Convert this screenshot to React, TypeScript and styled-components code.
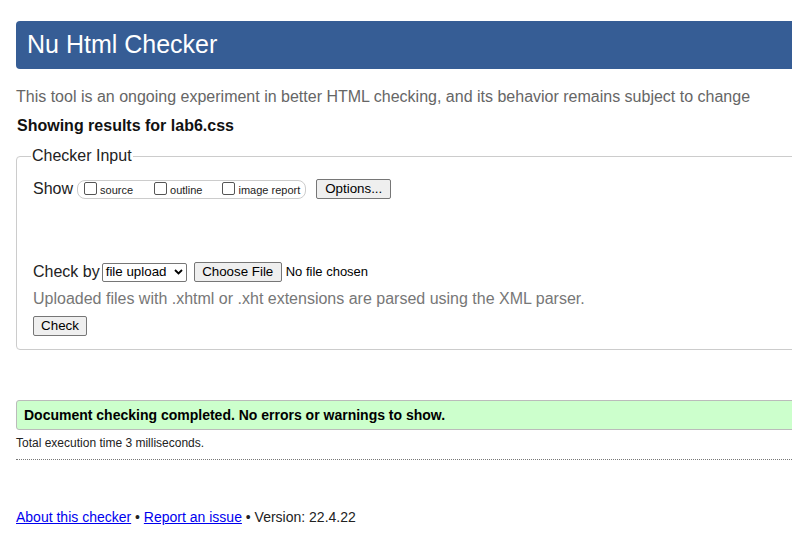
import React from 'react';
import styled, { createGlobalStyle } from 'styled-components';

const GlobalStyle = createGlobalStyle`
  html, body {
    margin: 0;
    padding: 0;
    background: #fff;
    overflow: hidden;
  }
  body {
    font-family: "Liberation Sans", Arial, sans-serif;
    color: #222;
  }
`;

const Page = styled.div`
  width: 1100px;
  padding: 21px 16px 0;
`;

const Header = styled.h1`
  margin: 0;
  height: 48px;
  line-height: 46px;
  padding: 0 11px;
  background: #365d95;
  color: #fff;
  font-size: 25px;
  font-weight: normal;
  border-radius: 4px;
`;

const Intro = styled.p`
  margin: 19px 0 0;
  font-size: 16px;
  line-height: 18px;
  color: #666;
`;

const Showing = styled.p`
  margin: 11px 0 0 1px;
  font-size: 16px;
  line-height: 18px;
  font-weight: bold;
  color: #111;
`;

const Fieldset = styled.fieldset`
  margin: 12px 0 0;
  padding: 6px 16px 13px;
  border: 1px solid #ccc;
  border-radius: 4px;
`;

const Legend = styled.legend`
  padding: 0 1px;
  margin-left: -2px;
  font-size: 16px;
  color: #222;
`;

const Row = styled.div<{ $mt?: number }>`
  display: flex;
  align-items: center;
  margin-top: ${(p) => p.$mt ?? 0}px;
  font-size: 16px;
  line-height: 20px;
`;

const Label = styled.span<{ $gap: number }>`
  margin-right: ${(p) => p.$gap}px;
`;

const Pill = styled.span`
  display: inline-flex;
  align-items: center;
  height: 17px;
  padding: 0 5px 0 6px;
  border: 1px solid #ccc;
  border-radius: 8px;
  margin-top: 2px;
`;

const Opt = styled.label<{ $gap?: number }>`
  display: inline-flex;
  align-items: center;
  font-size: 11px;
  color: #222;
  margin-right: ${(p) => p.$gap ?? 0}px;
`;

const Box = styled.span`
  display: inline-block;
  width: 11px;
  height: 11px;
  border: 1px solid #555;
  border-radius: 2px;
  margin-right: 3px;
  margin-top: -3px;
  background: #fff;
`;

const Button = styled.span<{ $ml?: number; $w: number }>`
  display: inline-flex;
  align-items: center;
  justify-content: center;
  box-sizing: border-box;
  width: ${(p) => p.$w}px;
  height: 20px;
  margin-left: ${(p) => p.$ml ?? 0}px;
  background: #efefef;
  border: 1px solid #767676;
  border-radius: 2px;
  font-size: 13.33px;
  color: #000;
`;

const Select = styled.span`
  display: inline-flex;
  align-items: center;
  justify-content: space-between;
  box-sizing: border-box;
  width: 85px;
  height: 19px;
  padding: 0 3px;
  border: 1px solid #767676;
  border-radius: 2px;
  font-size: 13.33px;
  color: #000;
`;

const NoFile = styled.span`
  margin-left: 4px;
  font-size: 13px;
  color: #000;
`;

const Hint = styled.p`
  margin: 8px 0 0;
  font-size: 16px;
  line-height: 18px;
  color: #777;
`;

const Success = styled.div`
  margin-top: 50px;
  height: 28px;
  line-height: 28px;
  padding: 0 7px;
  background: #ccffcc;
  border: 1px solid #bbb;
  border-radius: 3px;
  font-size: 14px;
  font-weight: bold;
  color: #000;
`;

const Timing = styled.p`
  margin: 6px 0 0;
  font-size: 12px;
  line-height: 14px;
  color: #222;
`;

const Rule = styled.hr`
  margin: 9px 0 0;
  border: 0;
  border-top: 1px dotted #777;
`;

const Footer = styled.p`
  margin: 49px 0 0;
  font-size: 14px;
  line-height: 16px;
  color: #222;
  a {
    color: #00e;
    text-decoration: underline;
  }
`;

const Chevron = () => (
  <svg width="9" height="6" viewBox="0 0 9 6">
    <path d="M1 1l3.5 3.5L8 1" fill="none" stroke="#000" strokeWidth="1.8" />
  </svg>
);

export default function App() {
  return (
    <>
      <GlobalStyle />
      <Page>
        <Header>Nu Html Checker</Header>
        <Intro>
          This tool is an ongoing experiment in better HTML checking, and its behavior remains subject to change
        </Intro>
        <Showing>Showing results for lab6.css</Showing>
        <Fieldset>
          <Legend>Checker Input</Legend>
          <Row $mt={7}>
            <Label $gap={4}>Show</Label>
            <Pill>
              <Opt $gap={21}>
                <Box />
                source
              </Opt>
              <Opt $gap={20}>
                <Box />
                outline
              </Opt>
              <Opt>
                <Box />
                image report
              </Opt>
            </Pill>
            <Button $w={75} $ml={10}>Options...</Button>
          </Row>
          <Row $mt={63}>
            <Label $gap={2}>Check by</Label>
            <Select>
              file upload
              <Chevron />
            </Select>
            <Button $w={88} $ml={7}>Choose File</Button>
            <NoFile>No file chosen</NoFile>
          </Row>
          <Hint>Uploaded files with .xhtml or .xht extensions are parsed using the XML parser.</Hint>
          <Row $mt={8}>
            <Button $w={54}>Check</Button>
          </Row>
        </Fieldset>
        <Success>Document checking completed. No errors or warnings to show.</Success>
        <Timing>Total execution time 3 milliseconds.</Timing>
        <Rule />
        <Footer>
          <a href="#about">About this checker</a> • <a href="#issue">Report an issue</a> • Version: 22.4.22
        </Footer>
      </Page>
    </>
  );
}
